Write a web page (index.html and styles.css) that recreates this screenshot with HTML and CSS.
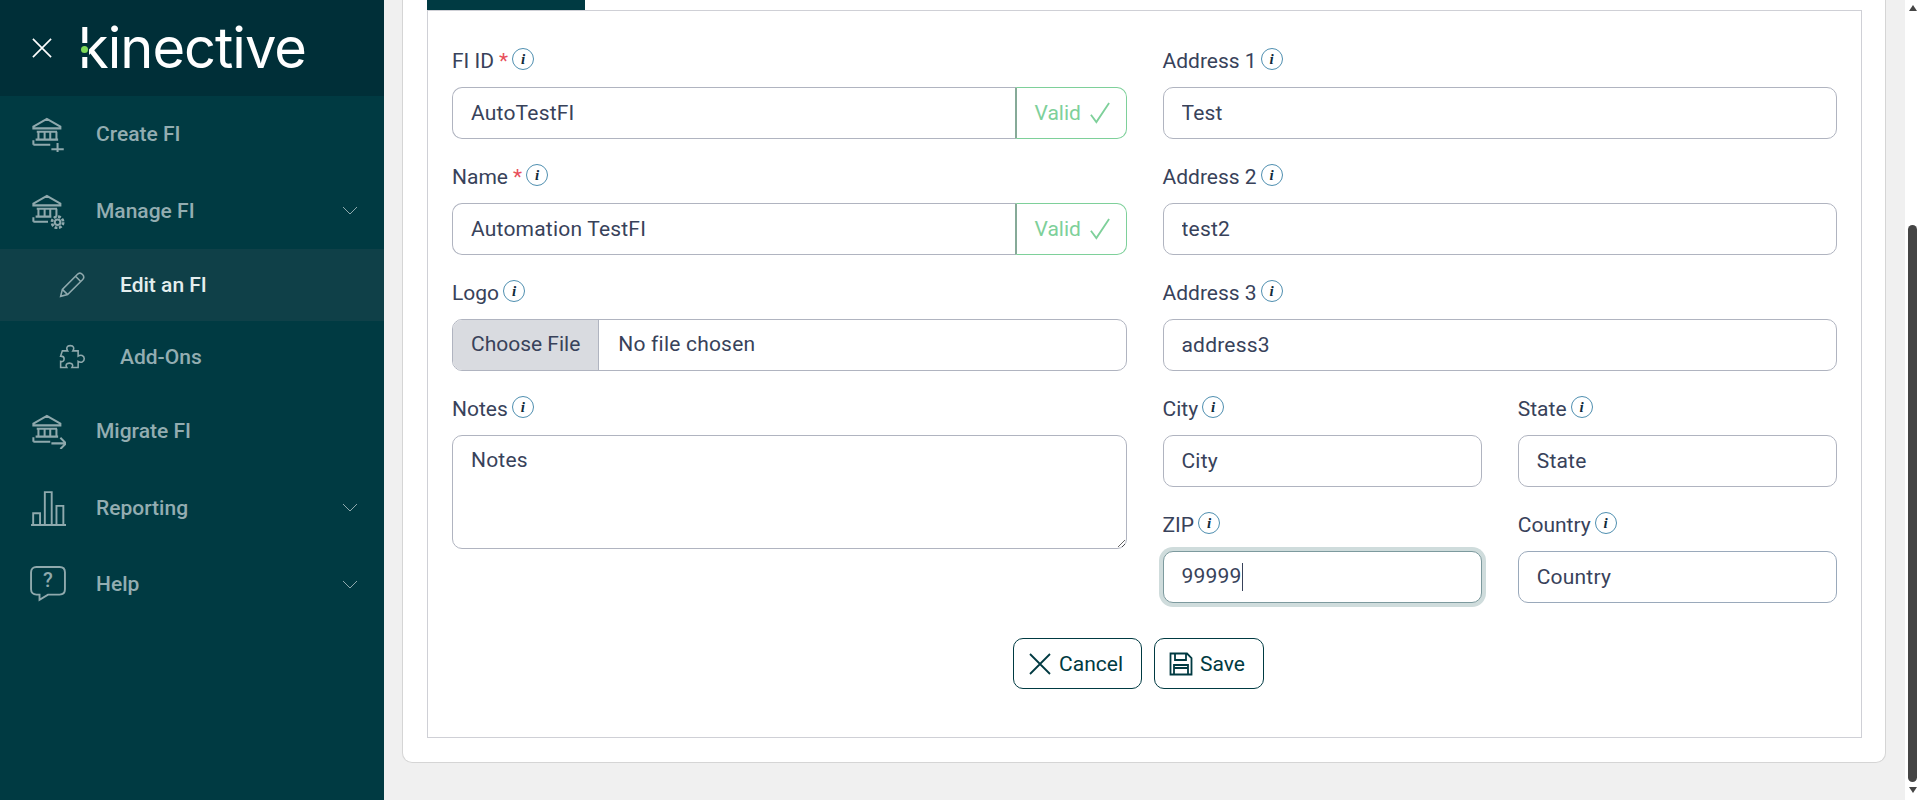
FILE: index.html
```html
<!DOCTYPE html>
<html>
<head>
    <link rel="stylesheet" href="styles.css">
    <title>Edit an FI</title>
</head>
<body>
    <aside class="sidebar">
        <div class="brand">
            <svg class="close-icon" viewBox="0 0 22 22"><path d="M1 1L21 21M21 1L1 21"/></svg>
            <div class="logo">kinective<span class="logo-gap"></span><span class="logo-dot"></span></div>
        </div>
        <nav>
            <a class="nav-item">
                <svg class="nav-icon" viewBox="0 0 32 32"><path d="M3 9.500L15 2.500L27 9.500V11H3ZM6 14H24M7.500 14V21M13 14V21M18 14V21M23.500 14V21M5 21H25M3 25.500H18M3 21.500V25.500M19 29.500H30M24.500 24V32"/></svg>
                <span>Create FI</span>
            </a>
            <a class="nav-item">
                <svg class="nav-icon" viewBox="0 0 32 32"><path d="M3 9.500L15 2.500L27 9.500V11H3ZM6 14H24M7.500 14V21M13 14V21M18 14V21M23.500 14V21M5 21H19M3 25.500H16M3 21.500V25.500"/><circle cx="24.500" cy="26" r="2.500"/><circle cx="24.500" cy="26" r="5" stroke-dasharray="2.500 1.400" stroke-width="2.400"/></svg>
                <span>Manage FI</span>
                <svg class="chevron" viewBox="0 0 16 9"><path d="M1 1L8 8L15 1"/></svg>
            </a>
            <a class="nav-item sub active">
                <svg class="nav-icon" viewBox="0 0 32 32"><path d="M3 29L5 21L22 4C24 2 26 2 28 4C30 6 30 8 28 10L11 27ZM5 21L11 27M20 6L26 12"/></svg>
                <span>Edit an FI</span>
            </a>
            <a class="nav-item sub">
                <svg class="nav-icon" viewBox="0 0 32 32"><path d="M5 9H11C9 6 10 3 14 3C18 3 19 6 17 9H23V15C26 13 30 14 30 18C30 22 26 23 23 21V28H16C18 25 16 23 13 23C10 23 8 25 10 28H3V21C6 22 7 20 7 18C7 16 6 15 3 15Z"/></svg>
                <span>Add-Ons</span>
            </a>
            <a class="nav-item">
                <svg class="nav-icon" viewBox="0 0 32 32"><path d="M3 9.500L15 2.500L27 9.500V11H3ZM6 14H24M7.500 14V21M13 14V21M18 14V21M23.500 14V21M5 21H25M3 25.500H18M3 21.500V25.500M19 27H32M27 22L32 27L27 32"/></svg>
                <span>Migrate FI</span>
            </a>
            <a class="nav-item">
                <svg class="nav-icon" viewBox="0 0 34 34"><path d="M1 33H34M3 33V22H9.500V33M14 33V2H20.500V33M25 33V15H31.500V33"/></svg>
                <span>Reporting</span>
                <svg class="chevron" viewBox="0 0 16 9"><path d="M1 1L8 8L15 1"/></svg>
            </a>
            <a class="nav-item">
                <svg class="nav-icon" viewBox="0 0 34 34"><path d="M6 1H28C31 1 33 3 33 6V22C33 25 31 27 28 27H17L9 32V27H6C3 27 1 25 1 22V6C1 3 3 1 6 1Z"/><text x="17" y="20" class="help-mark">?</text></svg>
                <span>Help</span>
                <svg class="chevron" viewBox="0 0 16 9"><path d="M1 1L8 8L15 1"/></svg>
            </a>
        </nav>
    </aside>

    <main class="content">
        <div class="card">
            <div class="tab"></div>
            <div class="panel">
                <div class="form-grid">
                    <div class="form-col">
                        <div class="field">
                            <label class="field-label">FI ID<span class="req">*</span><span class="info">i</span></label>
                            <div class="input-group">
                                <input class="input" type="text" value="AutoTestFI">
                                <div class="valid">Valid<svg viewBox="0 0 22 24"><path d="M1 14L7 22L21 1"/></svg></div>
                            </div>
                        </div>
                        <div class="field">
                            <label class="field-label">Name<span class="req">*</span><span class="info">i</span></label>
                            <div class="input-group">
                                <input class="input" type="text" value="Automation TestFI">
                                <div class="valid">Valid<svg viewBox="0 0 22 24"><path d="M1 14L7 22L21 1"/></svg></div>
                            </div>
                        </div>
                        <div class="field">
                            <label class="field-label">Logo<span class="info">i</span></label>
                            <div class="file-input">
                                <span class="file-button">Choose File</span>
                                <span class="file-name">No file chosen</span>
                            </div>
                        </div>
                        <div class="field">
                            <label class="field-label">Notes<span class="info">i</span></label>
                            <textarea class="input notes">Notes</textarea>
                        </div>
                    </div>

                    <div class="form-col">
                        <div class="field">
                            <label class="field-label">Address 1<span class="info">i</span></label>
                            <input class="input" type="text" value="Test">
                        </div>
                        <div class="field">
                            <label class="field-label">Address 2<span class="info">i</span></label>
                            <input class="input" type="text" value="test2">
                        </div>
                        <div class="field">
                            <label class="field-label">Address 3<span class="info">i</span></label>
                            <input class="input" type="text" value="address3">
                        </div>
                        <div class="field-pair">
                            <div class="field">
                                <label class="field-label">City<span class="info">i</span></label>
                                <input class="input" type="text" value="City">
                            </div>
                            <div class="field">
                                <label class="field-label">State<span class="info">i</span></label>
                                <input class="input" type="text" value="State">
                            </div>
                            <div class="field">
                                <label class="field-label">ZIP<span class="info">i</span></label>
                                <div class="input focused">99999<span class="caret"></span></div>
                            </div>
                            <div class="field">
                                <label class="field-label">Country<span class="info">i</span></label>
                                <input class="input hovered" type="text" value="Country">
                            </div>
                        </div>
                    </div>
                </div>

                <div class="button-container">
                    <button class="btn" type="button">
                        <svg viewBox="0 0 24 24"><path d="M2 2L22 22M22 2L2 22"/></svg>Cancel
                    </button>
                    <button class="btn" type="button">
                        <svg viewBox="0 0 24 24"><path d="M1.500 1.500H18L22.500 6V22.500H1.500ZM6 1.500V8H17V1.500M5 22.500V13H19V22.500M5 16H19"/></svg>Save
                    </button>
                </div>
            </div>
        </div>
    </main>

    <div class="scrollbar">
        <span class="arrow-up"></span>
        <span class="thumb"></span>
        <span class="arrow-down"></span>
    </div>
</body>
</html>
```

FILE: styles.css
```css
* {
    box-sizing: border-box;
}

body {
    display: flex;
    height: 800px;
    margin: 0;
    overflow: hidden;
    background-color: #f0f0f0;
    font-family: Roboto, "Liberation Sans", sans-serif;
    font-size: 21px;
    color: #38425a;
}

/* sidebar */
.sidebar {
    width: 384px;
    flex-shrink: 0;
    background-color: #003a42;
}

.brand {
    display: flex;
    align-items: center;
    height: 96px;
    padding-left: 32px;
    background-color: #002f38;
}

.close-icon {
    width: 20px;
    height: 20px;
    margin-right: 26px;
    fill: none;
    stroke: #fff;
    stroke-width: 1.800;
}

.logo {
    position: relative;
    font-family: Inter, sans-serif;
    font-size: 56px;
    font-weight: 400;
    line-height: 60px;
    letter-spacing: -1px;
    color: #fff;
}

.logo-gap {
    position: absolute;
    left: 2px;
    top: 25px;
    width: 9px;
    height: 14px;
    background-color: #002f38;
}

.logo-dot {
    position: absolute;
    left: 3px;
    top: 28px;
    width: 7px;
    height: 7px;
    border-radius: 50%;
    background-color: #7ed957;
}

.nav-item {
    display: flex;
    align-items: center;
    height: 76.500px;
    padding: 0 26px 0 30px;
    font-size: 21px;
    font-weight: 500;
    color: #93adb1;
}

.nav-item.sub {
    height: 72px;
    padding-left: 58px;
}

.nav-item.active {
    background-color: #0f4048;
    color: #e4eeee;
}

.nav-icon {
    width: 36px;
    height: 36px;
    margin-right: 30px;
    fill: none;
    stroke: #8fa9ad;
    stroke-width: 1.800;
    flex-shrink: 0;
}

.nav-item.sub .nav-icon {
    width: 28px;
    height: 28px;
    margin-right: 34px;
}

.help-mark {
    fill: #8fa9ad;
    stroke: none;
    font-size: 19px;
    text-anchor: middle;
}

.chevron {
    width: 16px;
    height: 9px;
    margin-left: auto;
    fill: none;
    stroke: #8fa9ad;
    stroke-width: 1;
}

/* main content */
.content {
    flex: 1;
    padding-right: 19px;
    padding-left: 18px;
}

.card {
    height: 763px;
    padding: 0 23px 0 24px;
    background-color: #fff;
    border: 1px solid #d5d5d5;
    border-top: none;
    border-radius: 0 0 10px 10px;
}

.tab {
    width: 158px;
    height: 10px;
    background-color: #003a42;
}

.panel {
    height: 728px;
    margin-top: 0;
    padding: 36px 24px 0;
    border: 1px solid #cfd0d6;
}

.form-grid {
    display: grid;
    grid-template-columns: 1fr 1fr;
    column-gap: 36px;
}

.field {
    margin-bottom: 24px;
}

.field-label {
    display: flex;
    align-items: center;
    height: 28px;
    margin-bottom: 12px;
    line-height: 28px;
}

.req {
    margin-left: 5px;
    color: #e8505b;
}

.info {
    display: inline-flex;
    align-items: center;
    justify-content: center;
    width: 22px;
    height: 22px;
    margin-top: -4px;
    margin-left: 4px;
    border: 1px solid #4f8fb0;
    border-radius: 50%;
    font-family: "Liberation Serif", serif;
    font-size: 15px;
    font-style: italic;
    font-weight: bold;
    color: #102a3a;
}

.input {
    display: block;
    width: 100%;
    height: 52px;
    padding: 0 18px;
    background-color: #fff;
    border: 1px solid #b0b4c0;
    border-radius: 10px;
    outline: none;
    font-family: inherit;
    font-size: inherit;
    line-height: 48px;
    letter-spacing: 0.2px;
    color: inherit;
}

.input.notes {
    height: 114px;
    padding-top: 10px;
    padding-bottom: 9px;
    line-height: 28px;
    resize: vertical;
}

.input.focused {
    border-color: #7d9a9e;
    box-shadow: 0 0 0 4px #cfdcdc;
}

.input.hovered {
    border-color: #9aa9bb;
}

.caret {
    display: inline-block;
    width: 1px;
    height: 28px;
    margin-left: 0;
    vertical-align: middle;
    background-color: #38425a;
}

.input-group {
    display: flex;
}

.input-group .input {
    flex: 1;
    min-width: 0;
    border-right: none;
    border-radius: 10px 0 0 10px;
}

.valid {
    display: flex;
    align-items: center;
    gap: 9px;
    width: 112px;
    height: 52px;
    padding-left: 18px;
    border: 1px solid #7ed09a;
    border-left: 2px solid #86aa98;
    border-radius: 0 10px 10px 0;
    color: #7ed09a;
}

.valid svg {
    width: 20px;
    height: 24px;
    fill: none;
    stroke: #7ed09a;
    stroke-width: 2;
}

.file-input {
    display: flex;
    align-items: center;
    height: 52px;
    border: 1px solid #b0b4c0;
    border-radius: 10px;
    overflow: hidden;
}

.file-button {
    height: 100%;
    padding: 0 18px;
    background-color: #d9dbe0;
    border-right: 1px solid #b0b4c0;
    line-height: 48px;
}

.file-name {
    padding-left: 19px;
    padding-bottom: 2px;
    letter-spacing: 0.2px;
}

.field-pair {
    display: grid;
    grid-template-columns: 1fr 1fr;
    column-gap: 36px;
}

.button-container {
    display: flex;
    justify-content: center;
    gap: 12px;
    margin-top: 11px;
    padding-right: 12px;
}

.btn {
    display: flex;
    align-items: center;
    gap: 7px;
    height: 51px;
    padding: 0 18px 0 14px;
    background-color: #fff;
    border: 1px solid #003a42;
    border-radius: 10px;
    font-family: inherit;
    font-size: 21px;
    color: #003a42;
}

.btn svg {
    width: 24px;
    height: 24px;
    fill: none;
    stroke: #003a42;
    stroke-width: 1.800;
}

/* page scrollbar */
.scrollbar {
    display: flex;
    flex-direction: column;
    align-items: center;
    width: 15px;
    flex-shrink: 0;
    background-color: #fff;
}

.arrow-up {
    margin-top: 5px;
    border: 4.500px solid transparent;
    border-top: none;
    border-bottom: 6px solid #454545;
}

.thumb {
    width: 9px;
    height: 557px;
    margin-top: 214px;
    margin-bottom: 5px;
    border-radius: 5px;
    background-color: #454545;
}

.arrow-down {
    border: 4.500px solid transparent;
    border-bottom: none;
    border-top: 6px solid #454545;
}
```
